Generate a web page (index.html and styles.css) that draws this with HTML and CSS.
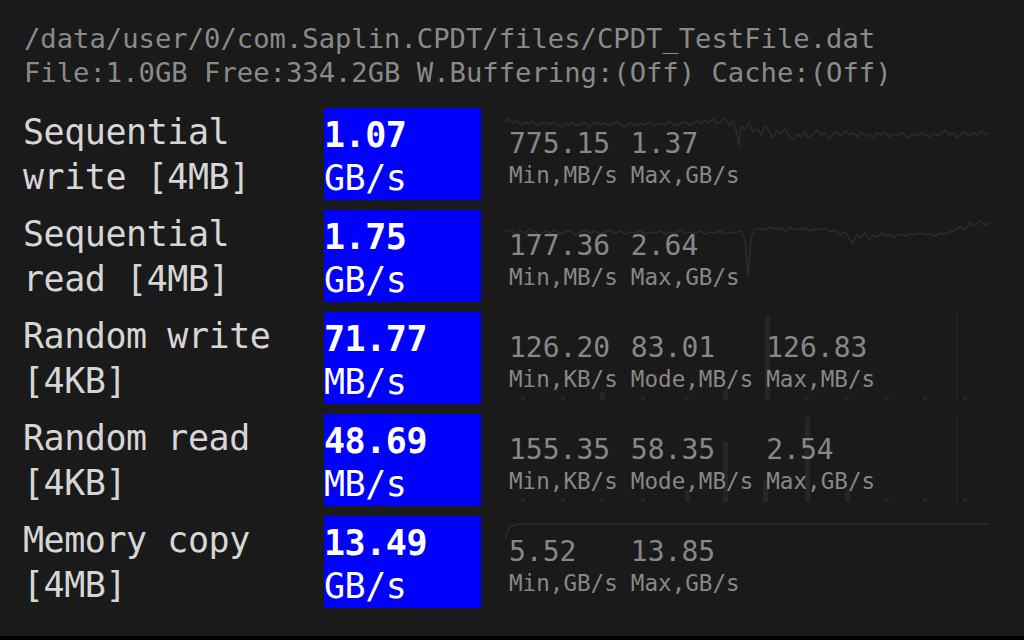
FILE: index.html
```html
<!DOCTYPE html>
<html>
<head>
<meta charset="utf-8">
<link rel="stylesheet" href="styles.css">
</head>
<body>
<main class="screen">
  <header class="info">
    <div class="info-line">/data/user/0/com.Saplin.CPDT/files/CPDT_TestFile.dat</div>
    <div class="info-line">File:1.0GB Free:334.2GB W.Buffering:(Off) Cache:(Off)</div>
  </header>

  <section class="results">
    <div class="row">
      <div class="label">Sequential<br>write [4MB]</div>
      <div class="score"><b>1.07</b><br>GB/s</div>
      <div class="stats">
        <svg class="graph" viewBox="0 0 487 92" width="487" height="92">
          <polyline points="0,14 4,11 8,15 12,13 16,17 20,14 24,16 28,13 32,18 36,15 40,14 44,17 48,14 52,16 56,19 60,15 64,17 68,14 72,18 76,16 80,15 84,19 88,16 92,14 96,17 100,15 104,18 108,16 112,14 116,17 120,19 124,15 128,16 132,18 136,15 140,17 144,14 148,18 152,16 156,15 160,17 164,13 168,16 172,18 176,15 180,14 184,17 188,15 192,13 196,16 200,12 204,15 208,11 212,16 216,14 220,10 224,17 228,13 232,25 234,38 236,18 240,22 244,14 248,24 252,20 256,27 260,18 264,23 268,30 272,22 276,26 280,20 284,28 288,32 292,26 296,29 300,24 304,30 308,26 312,22 316,27 320,25 324,31 328,26 332,24 336,28 340,23 344,27 348,25 352,29 356,24 360,28 364,26 368,30 372,25 376,27 380,24 384,29 388,26 392,28 396,25 400,27 404,30 408,26 412,28 416,24 420,27 424,29 428,25 432,28 436,26 440,22 444,27 448,25 452,30 456,26 460,24 464,28 468,25 472,27 476,23 480,26 485,25"/>
        </svg>
        <div class="col"><span class="num">775.15</span><span class="cap">Min,MB/s</span></div>
        <div class="col"><span class="num">1.37</span><span class="cap">Max,GB/s</span></div>
      </div>
    </div>

    <div class="row">
      <div class="label">Sequential<br>read [4MB]</div>
      <div class="score"><b>1.75</b><br>GB/s</div>
      <div class="stats">
        <svg class="graph" viewBox="0 0 487 92" width="487" height="92">
          <polyline points="0,22 5,20 10,24 15,21 20,23 25,19 30,22 35,25 40,21 45,23 50,20 55,24 60,22 65,21 70,25 75,22 80,20 85,23 90,21 95,24 100,22 105,20 110,23 115,21 120,24 125,22 130,23 135,21 140,24 145,22 150,23 155,21 160,24 165,22 170,23 175,20 180,24 185,22 190,23 195,21 200,24 205,22 210,23 215,21 220,24 225,22 230,23 236,21 240,30 243,66 246,28 250,19 255,18 260,20 265,17 270,19 275,18 280,21 285,17 290,20 295,19 300,18 305,21 310,19 315,20 320,18 325,22 330,20 335,25 340,22 345,29 348,34 352,24 356,28 360,22 364,30 368,25 372,27 376,23 380,26 384,24 388,27 392,25 396,24 400,26 405,24 410,25 415,23 420,25 425,24 430,26 435,23 440,24 445,22 450,20 455,17 460,19 465,13 470,16 475,11 480,15 485,13"/>
        </svg>
        <div class="col"><span class="num">177.36</span><span class="cap">Min,MB/s</span></div>
        <div class="col"><span class="num">2.64</span><span class="cap">Max,GB/s</span></div>
      </div>
    </div>

    <div class="row">
      <div class="label">Random write<br>[4KB]</div>
      <div class="score"><b>71.77</b><br>MB/s</div>
      <div class="stats">
        <svg class="graph bars" viewBox="0 0 487 92" width="487" height="92">
          <line class="faint" x1="452" y1="0" x2="452" y2="90"/>
          <rect x="16" y="85" width="4" height="3"/>
          <rect x="56" y="85" width="4" height="3"/>
          <rect x="95" y="80" width="5" height="8"/>
          <rect x="136" y="85" width="4" height="3"/>
          <rect x="180" y="85" width="4" height="3"/>
          <rect x="218" y="78" width="5" height="10"/>
          <rect x="260" y="4" width="5" height="84"/>
          <rect x="300" y="85" width="4" height="3"/>
          <rect x="340" y="85" width="4" height="3"/>
          <rect x="380" y="85" width="4" height="3"/>
          <rect x="418" y="85" width="4" height="3"/>
          <rect x="458" y="85" width="4" height="3"/>
        </svg>
        <div class="col"><span class="num">126.20</span><span class="cap">Min,KB/s</span></div>
        <div class="col"><span class="num">83.01</span><span class="cap">Mode,MB/s</span></div>
        <div class="col"><span class="num">126.83</span><span class="cap">Max,MB/s</span></div>
      </div>
    </div>

    <div class="row">
      <div class="label">Random read<br>[4KB]</div>
      <div class="score"><b>48.69</b><br>MB/s</div>
      <div class="stats">
        <svg class="graph bars" viewBox="0 0 487 92" width="487" height="92">
          <line class="faint" x1="452" y1="0" x2="452" y2="90"/>
          <rect x="16" y="85" width="4" height="3"/>
          <rect x="56" y="85" width="4" height="3"/>
          <rect x="95" y="85" width="4" height="3"/>
          <rect x="136" y="85" width="4" height="3"/>
          <rect x="180" y="76" width="5" height="12"/>
          <rect x="218" y="28" width="5" height="60"/>
          <rect x="258" y="66" width="5" height="22"/>
          <rect x="300" y="3" width="5" height="85"/>
          <rect x="340" y="76" width="5" height="12"/>
          <rect x="380" y="85" width="4" height="3"/>
          <rect x="418" y="85" width="4" height="3"/>
          <rect x="458" y="85" width="4" height="3"/>
        </svg>
        <div class="col"><span class="num">155.35</span><span class="cap">Min,KB/s</span></div>
        <div class="col"><span class="num">58.35</span><span class="cap">Mode,MB/s</span></div>
        <div class="col"><span class="num">2.54</span><span class="cap">Max,GB/s</span></div>
      </div>
    </div>

    <div class="row">
      <div class="label">Memory copy<br>[4MB]</div>
      <div class="score"><b>13.49</b><br>GB/s</div>
      <div class="stats">
        <svg class="graph" viewBox="0 0 487 92" width="487" height="92">
          <path d="M0,24 Q1,9 14,8 L485,8"/>
        </svg>
        <div class="col"><span class="num">5.52</span><span class="cap">Min,GB/s</span></div>
        <div class="col"><span class="num">13.85</span><span class="cap">Max,GB/s</span></div>
      </div>
    </div>
  </section>
</main>
</body>
</html>
```

FILE: styles.css
```css
html, body {
  margin: 0;
  padding: 0;
  background: #000;
}

.screen {
  height: 636px;
  background: #1a1a1a;
  font-family: "DejaVu Sans Mono", "Liberation Mono", monospace;
  overflow: hidden;
}

.info {
  padding: 22px 0 0 24px;
  color: #8a8a8a;
  font-size: 27.2px;
  line-height: 34px;
  white-space: nowrap;
}

.results {
  margin-top: 18px;
  display: flex;
  flex-direction: column;
  gap: 10px;
}

.row {
  display: flex;
  height: 92px;
}

.label {
  width: 301px;
  flex: none;
  padding: 2px 0 0 23px;
  color: #d6d6d6;
  font-size: 35px;
  letter-spacing: -0.45px;
  line-height: 45px;
  white-space: nowrap;
}

.score {
  width: 157px;
  flex: none;
  box-sizing: border-box;
  padding-top: 6px;
  background: #0000ff;
  color: #fff;
  font-size: 35px;
  letter-spacing: -0.45px;
  line-height: 43px;
  white-space: nowrap;
}

.score b {
  font-weight: bold;
}

.stats {
  position: relative;
  flex: 1;
  display: flex;
  gap: 13px;
  padding: 21px 0 0 28px;
  color: #878787;
}

.graph {
  position: absolute;
  left: 24px;
  top: 0;
  fill: none;
  stroke: #2b2b2b;
  stroke-width: 1.6;
  stroke-linejoin: round;
}

.graph.bars {
  fill: #262626;
  stroke: none;
}

.graph .faint {
  stroke: #202020;
  stroke-width: 2;
}

.col {
  position: relative;
  display: flex;
  flex-direction: column;
  white-space: nowrap;
}

.num {
  font-size: 28px;
  line-height: 30px;
}

.cap {
  font-size: 22.6px;
  line-height: 33px;
}
```
